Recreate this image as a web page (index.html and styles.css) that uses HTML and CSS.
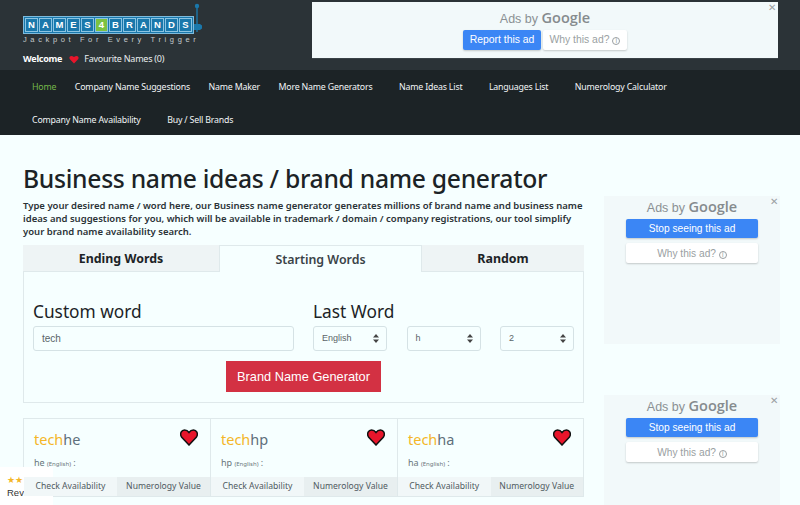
FILE: index.html
```html
<!DOCTYPE html>
<html lang="en">
<head>
<meta charset="utf-8">
<title>Business name ideas / brand name generator</title>
<link rel="stylesheet" href="styles.css">
</head>
<body>
<header class="top">
  <div class="brand">
    <div class="logo">
      <div class="tiles">
        <span class="tile">N</span><span class="tile">A</span><span class="tile">M</span><span class="tile">E</span><span class="tile">S</span><span class="tile four">4</span><span class="tile">B</span><span class="tile">R</span><span class="tile">A</span><span class="tile">N</span><span class="tile">D</span><span class="tile">S</span>
      </div>
      <svg class="lever" width="9" height="30" viewBox="0 0 9 30"><circle cx="3" cy="3" r="2.200" fill="#1a78ab"/><path d="M3 3V29" stroke="#1a78ab" stroke-width="1.400"/><path d="M0 21h6l2 1.500v3l-2 1.500H0z" fill="#1a78ab"/></svg>
      <div class="tagline">Jackpot For Every Trigger</div>
    </div>
    <div class="welcome"><b>Welcome</b>
      <svg class="mini-heart" width="10" height="9" viewBox="0 0 24 22"><path d="M12 21 2 10.500C-2 5 4-1.500 12 5c8-6.500 14 0 10 5.500z" fill="#e8152b"/></svg>
      <span>Favourite Names (0)</span></div>
  </div>
  <aside class="ad ad-wide">
    <span class="ad-x">✕</span>
    <div class="ads-by">Ads by <strong>Google</strong></div>
    <div class="ad-buttons">
      <span class="ad-btn primary">Report this ad</span>
      <span class="ad-btn">Why this ad? <i class="info">i</i></span>
    </div>
  </aside>
</header>
<nav class="nav">
  <a class="active">Home</a>
  <a>Company Name Suggestions</a>
  <a>Name Maker</a>
  <a class="drop">More Name Generators</a>
  <a class="drop">Name Ideas List</a>
  <a class="drop">Languages List</a>
  <a>Numerology Calculator</a>
  <a class="drop">Company Name Availability</a>
  <a class="drop">Buy / Sell Brands</a>
</nav>
<div class="page">
  <main class="content">
    <h1>Business name ideas / brand name generator</h1>
    <p class="intro">Type your desired name / word here, our Business name generator generates millions of brand name and business name ideas and suggestions for you, which will be available in trademark / domain / company registrations, our tool simplify your brand name availability search.</p>
    <div class="tabs">
      <div class="tab">Ending Words</div>
      <div class="tab current">Starting Words</div>
      <div class="tab">Random</div>
    </div>
    <form class="panel">
      <div class="fields">
        <div class="field-main">
          <label class="label">Custom word</label>
          <div class="control text">tech</div>
        </div>
        <div class="field-side">
          <label class="label">Last Word</label>
          <div class="selects">
            <div class="control select small">English<svg class="updown" width="6" height="9" viewBox="0 0 6 9"><path d="M3 0l3 3.500H0zM3 9L0 5.500h6z"/></svg></div>
            <div class="control select">h<svg class="updown" width="6" height="9" viewBox="0 0 6 9"><path d="M3 0l3 3.500H0zM3 9L0 5.500h6z"/></svg></div>
            <div class="control select">2<svg class="updown" width="6" height="9" viewBox="0 0 6 9"><path d="M3 0l3 3.500H0zM3 9L0 5.500h6z"/></svg></div>
          </div>
        </div>
      </div>
      <div class="submit"><span class="generate">Brand Name Generator</span></div>
    </form>
    <section class="results">
      <article class="card">
        <div class="card-body">
          <div class="name"><span class="stem">tech</span>he</div>
          <svg class="heart" width="18" height="17" viewBox="0 0 18 17"><path d="M9 16 1.500 8C-.5 4.500 1.500 1 4.500 1 6.500 1 8 2 9 3.500 10 2 11.500 1 13.500 1c3 0 5 3.500 3 7z" fill="#e8152b" stroke="#111" stroke-width="1.500"/></svg>
          <div class="meaning">he <small>(English)</small> :</div>
        </div>
        <div class="card-links"><span>Check Availability</span><span class="alt">Numerology Value</span></div>
      </article>
      <article class="card">
        <div class="card-body">
          <div class="name"><span class="stem">tech</span>hp</div>
          <svg class="heart" width="18" height="17" viewBox="0 0 18 17"><path d="M9 16 1.500 8C-.5 4.500 1.500 1 4.500 1 6.500 1 8 2 9 3.500 10 2 11.500 1 13.500 1c3 0 5 3.500 3 7z" fill="#e8152b" stroke="#111" stroke-width="1.500"/></svg>
          <div class="meaning">hp <small>(English)</small> :</div>
        </div>
        <div class="card-links"><span>Check Availability</span><span class="alt">Numerology Value</span></div>
      </article>
      <article class="card">
        <div class="card-body">
          <div class="name"><span class="stem">tech</span>ha</div>
          <svg class="heart" width="18" height="17" viewBox="0 0 18 17"><path d="M9 16 1.500 8C-.5 4.500 1.500 1 4.500 1 6.500 1 8 2 9 3.500 10 2 11.500 1 13.500 1c3 0 5 3.500 3 7z" fill="#e8152b" stroke="#111" stroke-width="1.500"/></svg>
          <div class="meaning">ha <small>(English)</small> :</div>
        </div>
        <div class="card-links"><span>Check Availability</span><span class="alt">Numerology Value</span></div>
      </article>
    </section>
  </main>
  <aside class="side">
    <div class="ad ad-tall">
      <span class="ad-x">✕</span>
      <div class="ads-by">Ads by <strong>Google</strong></div>
      <span class="ad-btn primary">Stop seeing this ad</span>
      <span class="ad-btn">Why this ad? <i class="info">i</i></span>
    </div>
    <div class="ad ad-tall">
      <span class="ad-x">✕</span>
      <div class="ads-by">Ads by <strong>Google</strong></div>
      <span class="ad-btn primary">Stop seeing this ad</span>
      <span class="ad-btn">Why this ad? <i class="info">i</i></span>
    </div>
  </aside>
</div>
<div class="review"><div class="stars">★★</div><div class="review-text">Review 5.0</div></div>
</body>
</html>
```
FILE: styles.css
```css
* { box-sizing: border-box; }
html, body { margin: 0; height: 505px; overflow: hidden; }
body { background: #f6ffff; font-family: "Noto Sans", "Open Sans", sans-serif; color: #1c2326; position: relative; }

.top { height: 70px; background: #2b3337; display: flex; align-items: flex-start; padding: 2px 22px 0 23px; justify-content: space-between; }
.brand { width: 200px; }
.logo { position: relative; padding-top: 14px; height: 45px; }
.tiles { display: flex; gap: 1px; width: 171px; height: 18px; padding: 1px; background: #1a78ab; border: 1px solid #7dbbdd; }
.tile { flex: 1; background: #1a78ab; border: 1px solid #8cc4e2; color: #fff; font: bold 9.500px/12px "Liberation Sans", sans-serif; text-align: center; }
.tile.four { background: #7cc242; }
.lever { position: absolute; left: 171px; top: 1px; }
.tagline { color: #c4cacc; font: 7.500px/10px "Liberation Sans", sans-serif; letter-spacing: 3.620px; white-space: nowrap; margin-top: 1px; }
.welcome { color: #e9eeef; font-size: 9px; letter-spacing: -.25px; line-height: 14px; margin-top: 5px; white-space: nowrap; display: flex; align-items: center; }
.welcome b { color: #fff; }
.mini-heart { margin: 0 5px 0 7px; }

.ad { position: relative; background: #f2f9fa; color: #8a9093; text-align: center; font-family: "Liberation Sans", sans-serif; }
.ad-x { position: absolute; right: 2px; top: 0; font-size: 10px; line-height: 12px; color: #9aa0a3; }
.ad-wide { width: 466px; height: 57px; margin-left: auto; border-bottom: 1px solid #3a4347; }
.ads-by { font-size: 12.500px; line-height: 16px; }
.ads-by strong { font-size: 14.500px; font-weight: 600; color: #858b8e; font-family: "Open Sans", sans-serif; }
.ad-wide .ads-by { padding-top: 8px; }
.ad-buttons { display: flex; justify-content: center; gap: 2px; margin-top: 3px; }
.ad-btn { background: #fff; border-radius: 2px; box-shadow: 0 1px 2px rgba(0,0,0,.2); font-size: 10.400px; line-height: 20px; height: 20px; padding: 0 6.500px; color: #9a9fa2; display: block; }
.ad-btn.primary { background: #3b86f5; color: #fff; }
.info { display: inline-block; width: 8px; height: 8px; border: 1px solid #9a9fa2; border-radius: 50%; font: 7px/6px "Liberation Sans", sans-serif; text-align: center; }

.nav { height: 65px; background: #1c2326; display: flex; flex-wrap: wrap; align-content: flex-start; padding: 1px 0 0 32px; column-gap: 18.500px; }
.nav a { color: #f2f5f6; font-size: 8.800px; letter-spacing: -.18px; line-height: 33px; height: 33px; white-space: nowrap; }
.nav a.drop { margin-right: 8px; }
.nav a.active { color: #76b84a; }

.page { display: flex; padding: 0 20px 0 23px; gap: 20px; align-items: flex-start; }
.content { width: 561px; flex: none; }
h1 { margin: 28px 0 0; font-size: 24.700px; line-height: 32px; font-weight: 500; color: #1c2326; white-space: nowrap; letter-spacing: -.3px; }
.intro { margin: 4px 0 0; font-size: 9.500px; line-height: 13px; font-weight: 600; color: #2a3236; }

.tabs { display: flex; margin-top: 7px; height: 27px; }
.tab { flex: 0 0 196px; background: #eef4f5; font-size: 12.400px; line-height: 27px; font-weight: 700; text-align: center; border-bottom: 1px solid #dfe9eb; color: #1c2326; }
.tab.current { flex-basis: 203px; background: #f6ffff; color: #3a4347; border: 1px solid #dfe9eb; border-bottom: 0; font-weight: 600; }
.tab:last-child { flex: 1; }

.panel { border: 1px solid #dfe9eb; border-top: 0; height: 131px; padding: 28px 9px 0; }
.fields { display: flex; gap: 19px; }
.field-main { width: 261px; }
.field-side { flex: 1; }
.label { display: block; font-size: 17.300px; line-height: 24px; color: #1c2326; margin-bottom: 2px; }
.control { height: 25px; border: 1px solid #d5e2e5; border-radius: 3px; font: 10px/23px "Liberation Sans", sans-serif; color: #5b6468; padding: 0 8px; position: relative; }
.selects { display: flex; justify-content: space-between; }
.select { width: 74px; font-size: 9px; }
.updown { position: absolute; right: 7px; top: 7px; fill: #444; }
.submit { text-align: center; margin-top: 10px; }
.generate { display: block; margin: 0 auto; width: 155px; height: 31px; background: #d33143; color: #fff; font: 12.800px/31px "Liberation Sans", sans-serif; }

.results { display: grid; grid-template-columns: repeat(3, 1fr); margin-top: 15px; border-top: 1px solid #dfe9eb; }
.card { border-left: 1px solid #dfe9eb; border-bottom: 1px solid #dfe9eb; position: relative; height: 78px; }
.card:last-child { border-right: 1px solid #dfe9eb; }
.card-body { height: 58px; padding: 9px 10px 0; position: relative; }
.name { font-size: 14.500px; line-height: 22px; color: #5e6f7b; }
.stem { color: #f4b628; }
.heart { position: absolute; right: 12.500px; top: 10px; }
.meaning { font-size: 9px; line-height: 13px; color: #69757b; margin-top: 6px; }
.meaning small { font-size: 6px; }
.card-links { display: flex; font-size: 8.600px; line-height: 19px; color: #4f5a5f; height: 19px; position: relative; z-index: 1; }
.card-links span { flex: 1; text-align: center; background: #f1f7f8; white-space: nowrap; }
.card-links .alt { background: #e8eff0; }

.side { width: 176px; flex: none; padding-top: 61px; display: flex; flex-direction: column; gap: 51px; }
.ad-tall { height: 148px; padding: 0 22px; }
.ad-tall .ads-by { padding: 3px 0 3px; }
.ad-tall .ad-btn { margin-bottom: 5px; font-size: 10.200px; height: 19px; line-height: 19px; }
.ad-tall .ad-btn:not(.primary) { height: 20px; line-height: 21px; }

.review { position: absolute; left: 0; bottom: 0; width: 53px; height: 38px; background: #fff; padding: 8px 7px 0; color: #333; }
.stars { color: #f4b628; font-size: 9px; line-height: 9px; }
.review-text { font-size: 9.500px; line-height: 12px; margin-top: 3px; white-space: nowrap; font-family: "Liberation Sans", sans-serif; }
```
